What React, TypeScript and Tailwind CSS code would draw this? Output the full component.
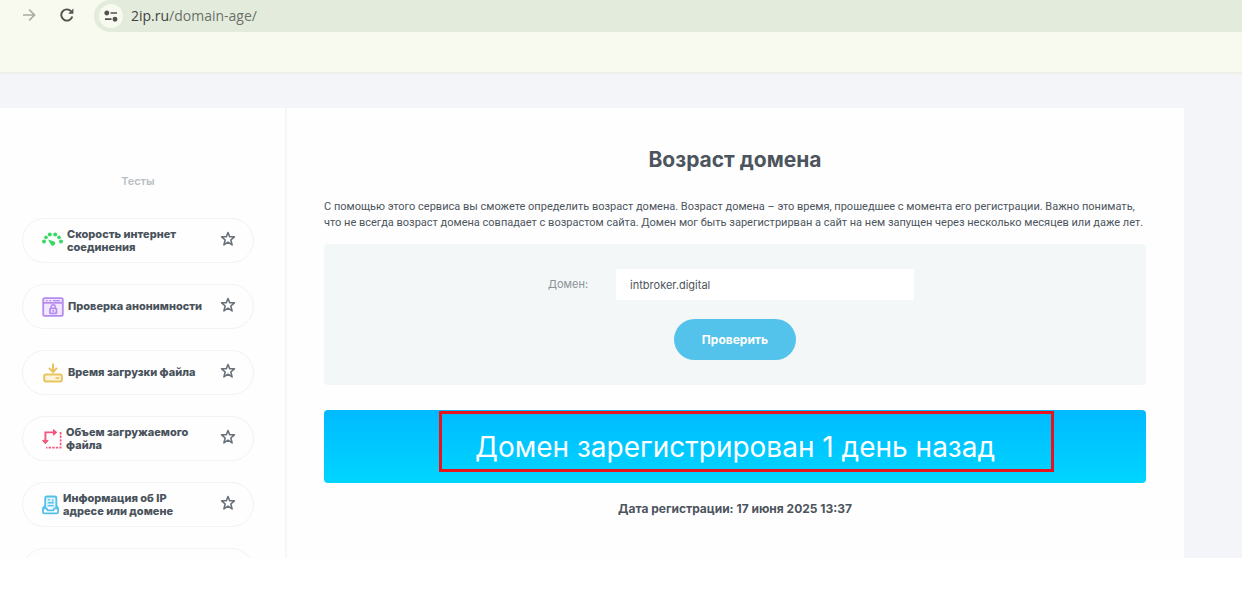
import type { ReactNode } from 'react'

interface Test {
  title: string
  icon: ReactNode
}

function SpeedIcon() {
  return (
    <svg width="21" height="20" viewBox="0 0 21 20" fill="#35d964" className="shrink-0">
      <circle cx="2" cy="10.6" r="2" />
      <circle cx="4" cy="6.400" r="1.800" />
      <circle cx="7.800" cy="3.400" r="2" />
      <circle cx="13.200" cy="3.400" r="2" />
      <circle cx="17" cy="6.400" r="1.800" />
      <circle cx="19" cy="10.600" r="2" />
      <path d="M6 8.400 12.200 10.600a2.300 2.300 0 1 1-3.400 3z" />
    </svg>
  )
}

function PrivacyIcon() {
  return (
    <svg width="22" height="20" viewBox="0 0 22 20" fill="none" stroke="#b58bf0" strokeWidth="1.8" className="shrink-0">
      <rect x="1.2" y="1.2" width="19.6" height="17.6" rx="1.6" fill="#f1e8fd" />
      <path d="M1.5 5.8h19" />
      <path d="M4 3.6h1.6M7.4 3.6H9M11 3.6h7" strokeWidth="1.4" />
      <rect x="8" y="11.4" width="6.4" height="5" rx="0.6" />
      <path d="M9.2 11.2V9.8a2 2 0 0 1 4 0v1.4M11.2 13v2" strokeWidth="1.5" />
    </svg>
  )
}

function DownloadIcon() {
  return (
    <svg width="22" height="20" viewBox="0 0 22 20" fill="none" stroke="#e8c35e" strokeWidth="2" className="shrink-0">
      <path d="M11 0.5v7.500M7 5l4 4 4-4" />
      <rect x="2.200" y="11.600" width="17.600" height="6.800" rx="1.600" fill="#fbf3dc" />
      <path d="M13.500 15h3.800" strokeWidth="1.600" />
    </svg>
  )
}

function SizeIcon() {
  return (
    <svg width="20" height="20" viewBox="0 0 20 20" fill="none" stroke="#f4577f" strokeWidth="1.900" className="shrink-0">
      <path d="M3.400 14V3.400H14" />
      <path d="M0.600 11.400l2.800 3.400 2.800-3.400zM11.400 0.600l3.400 2.800-3.400 2.800z" fill="#f4577f" strokeWidth="1" />
      <path d="M18.600 3v15.600H4" strokeWidth="1.700" strokeDasharray="2.400 1.200" />
    </svg>
  )
}

function InfoIcon() {
  return (
    <svg width="17" height="20" viewBox="0 0 18 20" fill="none" stroke="#54bfe8" strokeWidth="1.900" className="shrink-0">
      <path d="M3.400 13V2.600A1.600 1.600 0 0 1 5 1h8.600a1.600 1.600 0 0 1 1.600 1.600V13" fill="#e3f5fc" />
      <path d="M3 10.800 1 13.400v4a1.400 1.400 0 0 0 1.400 1.400h13.200a1.400 1.400 0 0 0 1.400-1.400v-4l-1.800-2.600" />
      <path d="M1.200 13.600h3.600l1.400 2.200h5.600l1.400-2.200h3.600" />
      <path d="M6 4.600h2.600M6 7.600h6.400M6 10.600h6.400M11.400 3.800v2.400" strokeWidth="1.400" />
    </svg>
  )
}

function StarIcon() {
  return (
    <svg width="16" height="16" viewBox="0 0 16 16" fill="none" stroke="#69727b" strokeWidth="1.600" strokeLinejoin="round">
      <path d="m8 1.500 1.700 4.300h4.700L10.800 9l1.300 4.900L8 11.200l-4.100 2.700L5.200 9 1.600 5.800h4.700z" />
    </svg>
  )
}

const tests: Test[] = [
  { title: 'Скорость интернет соединения', icon: <SpeedIcon /> },
  { title: 'Проверка анонимности', icon: <PrivacyIcon /> },
  { title: 'Время загрузки файла', icon: <DownloadIcon /> },
  { title: 'Объем загружаемого файла', icon: <SizeIcon /> },
  { title: 'Информация об IP адресе или домене', icon: <InfoIcon /> },
]

function BrowserBar() {
  return (
    <header className="shrink-0 border-b-2 border-[#eeefe8] bg-[#f8faf0]">
      <div className="flex h-8 items-start pl-[22px]">
        <button aria-label="Вперёд" className="mt-2 mr-6">
          <svg width="14" height="14" viewBox="0 0 14 14" fill="none" stroke="#a9aba4" strokeWidth="1.600">
            <path d="M1 7h11.500M7.200 1.600 12.600 7l-5.400 5.400" />
          </svg>
        </button>
        <button aria-label="Обновить" className="mt-2 mr-5">
          <svg width="14" height="14" viewBox="0 0 14 14" fill="none" stroke="#50524e" strokeWidth="1.900">
            <path d="M12.300 8.400A5.600 5.600 0 1 1 11 3.200" />
            <path d="M13.400 0.500v5.300H8.200z" fill="#50524e" stroke="none" />
          </svg>
        </button>
        <div className="flex h-8 flex-1 items-center gap-2 rounded-l-2xl bg-[#e3ecdc] pl-[5px]">
          <button aria-label="Сведения о сайте" className="flex size-6 items-center justify-center rounded-full bg-[#f8faf0]">
            <svg width="14" height="14" viewBox="0 0 14 14" fill="none" stroke="#50524e" strokeWidth="1.700">
              <circle cx="2.800" cy="4" r="1.600" fill="#50524e" />
              <path d="M6.500 4h6.500M1 10.200h6.500" />
              <circle cx="11" cy="10.200" r="1.600" fill="#50524e" />
            </svg>
          </button>
          <span className="font-['Open_Sans',sans-serif] text-sm text-[#6c706a]">
            <span className="text-[#40433f]">2ip.ru</span>/domain-age/
          </span>
        </div>
      </div>
      <div className="h-10" />
    </header>
  )
}

function Sidebar() {
  return (
    <aside className="w-[287px] shrink-0 border-r-2 border-[#f5f6f8] pr-[31px] pl-[22px]">
      <h2 className="pt-[65px] text-center text-[11px] leading-4 font-semibold text-[#b9bfc4]">Тесты</h2>
      <ul className="mt-[29px] flex flex-col gap-[21px]">
        {tests.map(test => (
          <li
            key={test.title}
            className="flex h-[45px] items-center justify-between rounded-full border border-[#f0f3f4] pr-[17px] pl-[19px]"
          >
            <a href="#" className="flex items-center gap-1 text-[11px] leading-[13px] font-extrabold text-[#49525b]">
              {test.icon}
              <span className="max-w-[144px]">{test.title}</span>
            </a>
            <button aria-label="В избранное" className="shrink-0 pb-[3px]">
              <StarIcon />
            </button>
          </li>
        ))}
        <li className="h-[45px] rounded-full border border-[#f0f3f4]" />
      </ul>
    </aside>
  )
}

export default function App() {
  return (
    <div className="flex h-screen flex-col overflow-hidden bg-white pb-[37px] font-['Inter',sans-serif]">
      <BrowserBar />
      <div className="flex min-h-0 flex-1 overflow-hidden bg-[#f3f5f8] pt-[34px] pr-[58px]">
        <div className="flex min-w-0 flex-1 bg-[#fefefe]">
          <Sidebar />
          <main className="min-w-0 flex-1 pt-9 pr-[38px] pl-[37px] text-[#4c555d]">
            <h1 className="text-center text-[21px] leading-8 font-bold">Возраст домена</h1>
            <p className="mt-[23px] font-['Roboto',sans-serif] text-[11px] leading-4">
              С помощью этого сервиса вы сможете определить возраст домена. Возраст домена – это время, прошедшее с момента его регистрации. Важно понимать,
              <br />
              что не всегда возраст домена совпадает с возрастом сайта. Домен мог быть зарегистрирван а сайт на нем запущен через несколько месяцев или даже лет.
            </p>
            <form className="mt-[13px] rounded-sm bg-[#f3f7f8] pt-[25px] pb-[25px]" onSubmit={e => e.preventDefault()}>
              <div className="flex items-center justify-center pr-2">
                <label htmlFor="domain" className="mr-7 text-[11px] text-[#8c9296]">
                  Домен:
                </label>
                <input
                  id="domain"
                  type="text"
                  defaultValue="intbroker.digital"
                  className="h-[31px] w-[298px] bg-white px-3.5 text-[11px]"
                />
              </div>
              <button type="submit" className="mx-auto mt-[19px] block h-[41px] w-[122px] rounded-full bg-[#54c3eb] text-xs font-bold text-white">
                Проверить
              </button>
            </form>
            <div className="relative mt-[25px] flex h-[73px] items-center justify-center rounded bg-linear-to-b from-[#00baff] to-[#00d5ff] text-[28px] text-white">
              Домен зарегистрирован 1 день назад
              <div className="absolute top-px right-[92px] bottom-[11px] left-[115px] border-3 border-[#e8131b]" />
            </div>
            <p className="mt-[18px] text-center text-xs leading-4 font-bold">Дата регистрации: 17 июня 2025 13:37</p>
          </main>
        </div>
      </div>
    </div>
  )
}
